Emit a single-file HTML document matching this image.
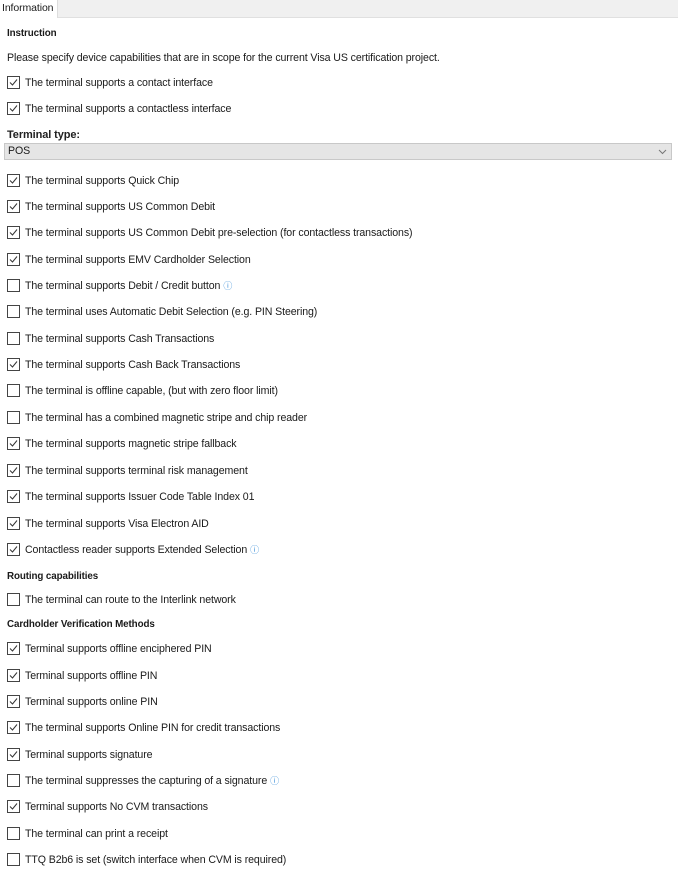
<!DOCTYPE html>
<html><head><meta charset="utf-8"><style>
body{margin:0;width:678px;height:875px;background:#fff;font-family:"Liberation Sans",sans-serif;font-size:10.6px;color:#1a1a1a;position:relative;overflow:hidden;letter-spacing:-0.1px}
.strip{position:absolute;left:0;top:0;width:678px;height:17px;background:#f0f0f0;border-bottom:1px solid #e0e0e0}
.tab{position:absolute;left:0;top:0;width:58px;height:18px;background:#fff;border-right:1px solid #ddd;line-height:16px;padding-left:2px;box-sizing:border-box;font-size:10.5px}
.t{position:absolute;left:7px;white-space:nowrap;line-height:12px}
.b{font-weight:bold;font-size:9.8px}
.r{position:absolute;left:7px;white-space:nowrap;line-height:13px}
.cb{position:absolute;left:0;top:0;width:11px;height:11px;border:1px solid #444;background:#fff}
.r span.l{position:absolute;left:18px;top:1px}
.i{color:#3c8fd8;font-size:9px;margin-left:3px}
.dd{position:absolute;left:4px;top:143px;width:668px;height:17px;background:#e5e5e5;border:1px solid #c8c8c8;box-sizing:border-box;line-height:15px;padding-left:3px}
</style></head><body>
<div class="strip"></div><div class="tab">Information</div>
<div class="t b" style="top:28px">Instruction</div>
<div class="t" style="top:52px">Please specify device capabilities that are in scope for the current Visa US certification project.</div>
<div class="t b" style="top:129px;font-size:11px;color:#222">Terminal type:</div>
<div class="dd">POS<svg style="position:absolute;right:4px;top:5px" width="9" height="6"><path d="M1 1L4.5 4.5L8 1" stroke="#777" fill="none"/></svg></div>
<div class="t b" style="top:571px">Routing capabilities</div>
<div class="t b" style="top:619px">Cardholder Verification Methods</div>
<div id="rows"></div>
<script>
var R=[[76,1,"The terminal supports a contact interface"],[102,1,"The terminal supports a contactless interface"],
[174,1,"The terminal supports Quick Chip"],[200,1,"The terminal supports US Common Debit"],
[226,1,"The terminal supports US Common Debit pre-selection (for contactless transactions)"],
[253,1,"The terminal supports EMV Cardholder Selection"],[279,0,"The terminal supports Debit / Credit button",1],
[305,0,"The terminal uses Automatic Debit Selection (e.g. PIN Steering)"],[332,0,"The terminal supports Cash Transactions"],
[358,1,"The terminal supports Cash Back Transactions"],[384,0,"The terminal is offline capable, (but with zero floor limit)"],
[411,0,"The terminal has a combined magnetic stripe and chip reader"],[437,1,"The terminal supports magnetic stripe fallback"],
[464,1,"The terminal supports terminal risk management"],[490,1,"The terminal supports Issuer Code Table Index 01"],
[517,1,"The terminal supports Visa Electron AID"],[543,1,"Contactless reader supports Extended Selection",1],
[593,0,"The terminal can route to the Interlink network"],
[642,1,"Terminal supports offline enciphered PIN"],[669,1,"Terminal supports offline PIN"],[695,1,"Terminal supports online PIN"],
[721,1,"The terminal supports Online PIN for credit transactions"],[748,1,"Terminal supports signature"],
[774,0,"The terminal suppresses the capturing of a signature",1],[800,1,"Terminal supports No CVM transactions"],
[827,0,"The terminal can print a receipt"],[853,0,"TTQ B2b6 is set (switch interface when CVM is required)"]];
var h="";R.forEach(function(r){h+='<div class="r" style="top:'+r[0]+'px"><div class="cb">'+(r[1]?'<svg width="11" height="11" style="position:absolute;left:0;top:0"><path d="M2 5.5L4.5 8L9 2.5" stroke="#333" stroke-width="1" fill="none"/></svg>':'')+'</div><span class="l">'+r[2]+(r[3]?'<span class="i">ⓘ</span>':'')+'</span></div>';});
document.getElementById("rows").innerHTML=h;
</script>
</body></html>
